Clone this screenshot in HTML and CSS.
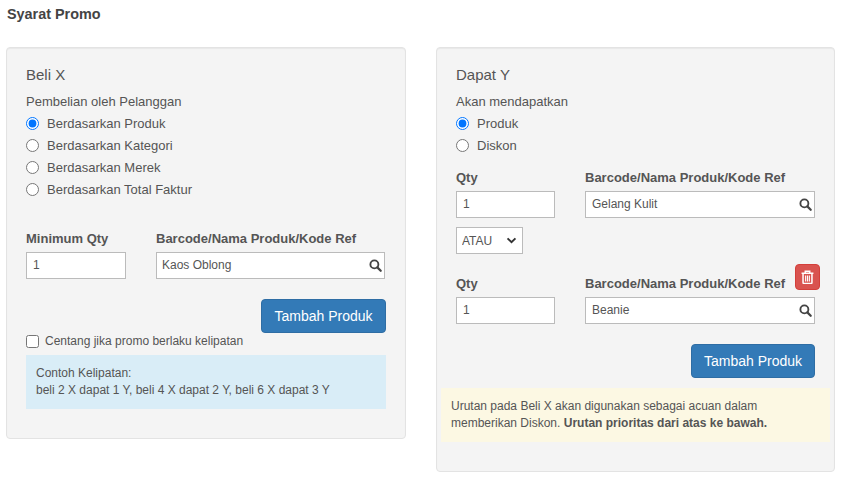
FILE: index.html
```html
<!DOCTYPE html>
<html lang="id">
<head>
<meta charset="utf-8">
<title>Syarat Promo</title>
<link rel="stylesheet" href="styles.css">
</head>
<body>
<h1 class="page-title">Syarat Promo</h1>
<div class="columns">
  <section class="well well-left">
    <h2 class="well-title">Beli X</h2>
    <p class="lead-text">Pembelian oleh Pelanggan</p>
    <label class="radio"><input type="radio" name="x" checked>Berdasarkan Produk</label>
    <label class="radio"><input type="radio" name="x">Berdasarkan Kategori</label>
    <label class="radio"><input type="radio" name="x">Berdasarkan Merek</label>
    <label class="radio"><input type="radio" name="x">Berdasarkan Total Faktur</label>
    <div class="row row-left">
      <div class="field qty-left">
        <label class="field-label">Minimum Qty</label>
        <input class="text-input" type="text" value="1">
      </div>
      <div class="field search-left">
        <label class="field-label">Barcode/Nama Produk/Kode Ref</label>
        <div class="search-box">
          <input class="text-input search-input" type="text" value="Kaos Oblong">
          <svg class="search-icon" viewBox="0 0 14 14" aria-hidden="true"><circle cx="5.8" cy="5.8" r="4.3" fill="none" stroke="#444" stroke-width="2"/><path d="M9 9l3.6 3.6" stroke="#444" stroke-width="2.4" stroke-linecap="round"/></svg>
        </div>
      </div>
    </div>
    <div class="actions actions-left"><button class="btn" type="button">Tambah Produk</button></div>
    <label class="check"><input type="checkbox">Centang jika promo berlaku kelipatan</label>
    <div class="note note-info">Contoh Kelipatan:<br>beli 2 X dapat 1 Y, beli 4 X dapat 2 Y, beli 6 X dapat 3 Y</div>
  </section>
  <section class="well well-right">
    <h2 class="well-title">Dapat Y</h2>
    <p class="lead-text">Akan mendapatkan</p>
    <label class="radio"><input type="radio" name="y" checked>Produk</label>
    <label class="radio"><input type="radio" name="y">Diskon</label>
    <div class="row row-right-1">
      <div class="field qty-right">
        <label class="field-label">Qty</label>
        <input class="text-input" type="text" value="1">
      </div>
      <div class="field search-right">
        <label class="field-label">Barcode/Nama Produk/Kode Ref</label>
        <div class="search-box">
          <input class="text-input search-input" type="text" value="Gelang Kulit">
          <svg class="search-icon" viewBox="0 0 14 14" aria-hidden="true"><circle cx="5.8" cy="5.8" r="4.3" fill="none" stroke="#444" stroke-width="2"/><path d="M9 9l3.6 3.6" stroke="#444" stroke-width="2.4" stroke-linecap="round"/></svg>
        </div>
      </div>
    </div>
    <div class="select-wrap">
      <select class="select"><option>ATAU</option><option>DAN</option></select>
      <svg class="select-arrow" viewBox="0 0 12 8" aria-hidden="true"><path d="M1.5 1.5L6 6l4.5-4.5" fill="none" stroke="#333" stroke-width="2.2"/></svg>
    </div>
    <div class="row row-right-2">
      <div class="field qty-right">
        <label class="field-label">Qty</label>
        <input class="text-input" type="text" value="1">
      </div>
      <div class="field search-right">
        <label class="field-label">Barcode/Nama Produk/Kode Ref</label>
        <div class="search-box">
          <input class="text-input search-input" type="text" value="Beanie">
          <svg class="search-icon" viewBox="0 0 14 14" aria-hidden="true"><circle cx="5.8" cy="5.8" r="4.3" fill="none" stroke="#444" stroke-width="2"/><path d="M9 9l3.6 3.6" stroke="#444" stroke-width="2.4" stroke-linecap="round"/></svg>
        </div>
      </div>
      <button class="btn-delete" type="button" aria-label="Hapus">
        <svg viewBox="0 0 14 15" aria-hidden="true"><path d="M.6 3.4h12.8M4.6 3.2V1.2h4.8v2M2.2 3.6v9.9c0 .6.4 1 1 1h7.6c.6 0 1-.4 1-1V3.6" fill="none" stroke="#fff" stroke-width="1.6"/><path d="M5 6v6.4M7 6v6.4M9 6v6.4" stroke="#fff" stroke-width="1.2"/></svg>
      </button>
    </div>
    <div class="actions actions-right"><button class="btn" type="button">Tambah Produk</button></div>
    <div class="note note-warn">Urutan pada Beli X akan digunakan sebagai acuan dalam memberikan Diskon. <strong>Urutan prioritas dari atas ke bawah.</strong></div>
  </section>
</div>
</body>
</html>
```

FILE: styles.css
```css
* { box-sizing: border-box; }
html, body { margin: 0; padding: 0; }
body {
  font-family: "Liberation Sans", Arial, sans-serif;
  font-size: 13px;
  line-height: 18px;
  color: #555;
  background: #fff;
  padding: 6px 0 0 6px;
  overflow: hidden;
}
.page-title {
  margin: 0 0 24px 1px;
  font-size: 14.4px;
  line-height: 17px;
  font-weight: 700;
  color: #444;
}
.columns { display: flex; align-items: flex-start; gap: 30px; }
.well {
  background: #f4f4f4;
  border: 1px solid #e3e3e3;
  border-radius: 4px;
  box-shadow: inset 0 1px 1px rgba(0,0,0,.05);
  padding: 17px 19px 0;
}
.well-left { width: 400px; height: 392px; }
.well-right { width: 399px; height: 425px; }
.well-title {
  margin: 0 0 7px;
  font-size: 15px;
  line-height: 20px;
  font-weight: 400;
  color: #555;
}
.lead-text { margin: 0 0 1px; height: 20px; line-height: 20px; }
.radio {
  display: flex;
  align-items: center;
  height: 22px;
}
.radio input { margin: 0 8px 2px 0; width: 13px; height: 13px; }
.row { display: flex; gap: 30px; position: relative; }
.row-left { margin-top: 29px; }
.row-right-1 { margin-top: 12px; }
.row-right-2 { margin-top: 21px; }
.field { display: flex; flex-direction: column; }
.qty-left { width: 100px; }
.search-left { width: 229px; }
.qty-right { width: 99px; }
.search-right { width: 230px; }
.field-label {
  font-weight: 700;
  color: #555;
  font-size: 13px;
  line-height: 18px;
  margin-bottom: 4px;
  white-space: nowrap;
}
.text-input {
  width: 100%;
  height: 27px;
  border: 1px solid #bbb;
  background: #fff;
  padding: 0 5px 2px;
  font: 12px "Liberation Sans", Arial, sans-serif;
  color: #555;
  border-radius: 0;
  outline: none;
}
.qty-left .text-input,
.qty-right .text-input,
.search-right .text-input { padding-left: 6px; }
.search-box { position: relative; }
.search-box .search-input { padding-right: 24px; }
.search-icon { position: absolute; right: 3px; top: 7px; width: 13px; height: 13px; }
.actions { display: flex; justify-content: flex-end; }
.actions-left { margin-top: 20px; }
.actions-right { margin-top: 20px; }
.btn {
  width: 125px;
  height: 34px;
  padding: 0;
  background: #337ab7;
  border: 1px solid #2e6da4;
  border-radius: 4px;
  color: #fff;
  font: 14px "Liberation Sans", Arial, sans-serif;
}
.actions-right .btn { width: 124px; }
.check {
  display: flex;
  align-items: center;
  height: 16px;
  font-size: 12px;
}
.check input { margin: 0 6px 0 0; width: 13px; height: 13px; }
.note { font-size: 12px; line-height: 17px; }
.note-info {
  margin-top: 6px;
  height: 54px;
  padding: 10px;
  background: #d9edf7;
}
.note-warn {
  margin: 10px -15px 0;
  height: 54px;
  padding: 10px;
  background: #fcf8e3;
}
.select-wrap { position: relative; width: 67px; margin-top: 9px; }
.select {
  display: block;
  appearance: none;
  width: 100%;
  height: 27px;
  border: 1px solid #bbb;
  background: #fff;
  font: 12px "Liberation Sans", Arial, sans-serif;
  color: #555;
  padding: 0 0 0 5px;
  border-radius: 0;
}
.select-arrow {
  position: absolute;
  right: 6px;
  top: 10px;
  width: 11px;
  height: 7px;
  pointer-events: none;
}
.btn-delete {
  position: absolute;
  left: 339px;
  top: -11px;
  width: 25px;
  height: 26px;
  padding: 0;
  display: flex;
  align-items: center;
  justify-content: center;
  background: #d9534f;
  border: 1px solid #d43f3a;
  border-radius: 4px;
}
.btn-delete svg { width: 13px; height: 14px; }
```
